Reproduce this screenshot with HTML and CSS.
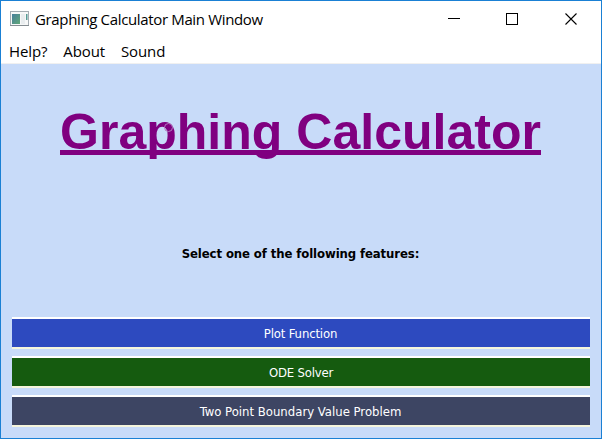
FILE: index.html
```html
<!DOCTYPE html>
<html lang="en">
<head>
<meta charset="utf-8">
<title>Graphing Calculator Main Window</title>
<link rel="stylesheet" href="styles.css">
</head>
<body>
<div class="window">
  <header class="titlebar">
    <svg class="app-icon" width="20" height="16" viewBox="0 0 20 16">
      <defs><linearGradient id="pane" x1="0" y1="0" x2="1" y2="1"><stop offset="0" stop-color="#477f9c"/><stop offset="1" stop-color="#61a878"/></linearGradient></defs>
      <rect x=".5" y=".5" width="18" height="14" fill="#f7f8f8" stroke="#a5adb3"/>
      <path d="M0 14.5H19" stroke="#858d92"/>
      <rect x="2" y="3" width="8" height="10" fill="url(#pane)"/>
      <rect x="11" y="3" width="4" height="10" fill="#e9edef"/>
      <rect x="16" y="3" width="1.5" height="6" fill="#579b96"/>
    </svg>
    <span class="title">Graphing Calculator Main Window</span>
    <svg class="controls" width="130" height="12" viewBox="0 0 130 12" fill="none" stroke="#000" shape-rendering="crispEdges">
      <path d="M0 5.5H12"/>
      <rect x="58.5" y=".5" width="11" height="11"/>
      <path d="M117.5 .5L128.5 11.5M128.5 .5L117.5 11.5" shape-rendering="auto" stroke-width="1.1"/>
    </svg>
  </header>
  <nav class="menu"><span>Help?</span><span>About</span><span>Sound</span></nav>
  <main class="content">
    <h1>Graphing Calculator</h1>
    <p class="prompt">Select one of the following features:</p>
    <div class="buttons">
      <button class="plot">Plot Function</button>
      <button class="ode">ODE Solver</button>
      <button class="boundary">Two Point Boundary Value Problem</button>
    </div>
  </main>
</div>
</body>
</html>
```
FILE: styles.css
```css
* { box-sizing: border-box; }
body { margin: 0; }
.window { width: 602px; height: 439px; border: 1px solid #1a80d4; background: #fff; display: flex; flex-direction: column; font-family: "Open Sans", sans-serif; color: #000; }
.titlebar { height: 36px; display: flex; align-items: center; padding: 0 23px 0 9px; flex: none; }
.app-icon { margin-right: 5px; }
.title { font-size: 15px; letter-spacing: -0.35px; line-height: 20px; white-space: nowrap; }
.controls { margin-left: auto; }
.menu { height: 27px; flex: none; display: flex; padding: 4px 0 0 8px; gap: 16px; font-size: 15px; letter-spacing: -0.12px; line-height: 21px; border-bottom: 1px solid #f0f0f0; }
.content { flex: 1; background: #c8dbf9; padding: 0 11px; display: flex; flex-direction: column; }
h1 { position: relative; margin: 39px 0 0; height: 58px; padding-right: 1px; font: bold 50px/58px "Liberation Sans", sans-serif; letter-spacing: 0.02px; color: #800080; text-align: center; white-space: nowrap; text-decoration: underline; text-decoration-thickness: 5px; text-underline-offset: 1px; text-decoration-skip-ink: none; }
h1::after { content: ""; position: absolute; left: 152px; top: 20px; width: 7px; height: 7px; border: 1px solid #b17ac0; border-radius: 50%; }
.prompt { margin: 85px 0 0; height: 16px; padding-right: 1px; font: bold 13px/16px "DejaVu Sans Condensed", "DejaVu Sans", sans-serif; letter-spacing: -0.1px; text-align: center; white-space: nowrap; }
.buttons { display: flex; flex-direction: column; gap: 7px; margin-top: 55px; }
button { height: 32px; width: 578px; padding: 2px 1px 0 0; border: 0; border-top: 2px solid #fff; border-bottom: 2px solid #f5f5dc; color: #fff; font: 13px/16px "DejaVu Sans Condensed", "DejaVu Sans", sans-serif; }
.plot { background: #2d4abf; letter-spacing: -0.15px; }
.ode { background: #155b0f; letter-spacing: -0.2px; padding-right: 0; }
.boundary { background: #3d4563; }
```
